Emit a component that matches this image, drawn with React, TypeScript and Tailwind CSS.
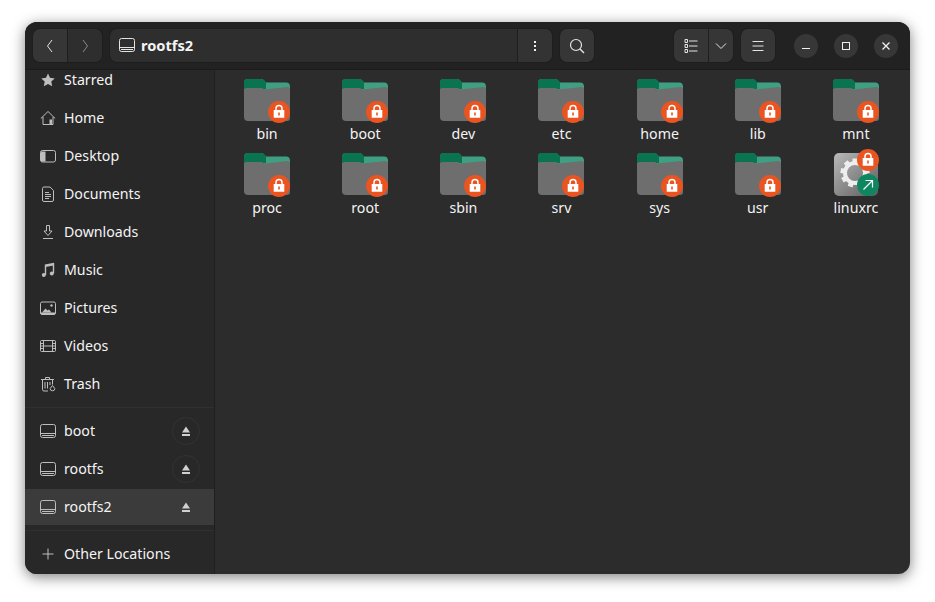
import type { ReactNode } from 'react'

const ICON = '#bebebe'

function Glyph({ children, size = 16 }: { children: ReactNode; size?: number }) {
  return (
    <svg width={size} height={size} viewBox="0 0 16 16" fill="none" stroke={ICON} strokeWidth="1" className="shrink-0">
      {children}
    </svg>
  )
}

function DriveIcon({ color = ICON }: { color?: string }) {
  return (
    <svg width="16" height="16" viewBox="0 0 16 16" fill="none" stroke={color} strokeWidth="1" className="shrink-0">
      <rect x="0.5" y="1.5" width="15" height="13" rx="2" />
      <path d="M0.5 10.5h15M2 12.500h12" />
    </svg>
  )
}

const sidebarIcons: Record<string, ReactNode> = {
  Starred: (
    <Glyph>
      <path d="M8 1.500l2 4.300 4.700.6-3.400 3.200.9 4.700L8 11.900l-4.200 2.400.9-4.700L1.300 6.400 6 5.800z" fill={ICON} stroke="none" />
    </Glyph>
  ),
  Home: (
    <Glyph>
      <path d="M0.800 8.500L8 1.500l7.200 7M3 7v7.500h10V7" />
      <path d="M9.500 9.500h2.500v5H9.500z" fill={ICON} stroke="none" />
    </Glyph>
  ),
  Desktop: (
    <Glyph>
      <rect x="0.5" y="2.500" width="15" height="11.500" rx="2" />
      <path d="M1 3.500h4.500v10H1z" fill={ICON} stroke="none" />
    </Glyph>
  ),
  Documents: (
    <Glyph>
      <path d="M2.500 2.500a1.500 1.500 0 0 1 1.500-1.500h6l3.500 3.500v9.500a1.500 1.500 0 0 1-1.500 1.500H4a1.500 1.500 0 0 1-1.500-1.500z" />
      <path d="M5 6.500h4M5 8.500h6M5 10.500h6M5 12.500h4" />
    </Glyph>
  ),
  Downloads: (
    <Glyph>
      <path d="M6.500 1.500h3v5.500h2.500L8 11.500 4 7h2.500zM3 14.500h10" />
    </Glyph>
  ),
  Music: (
    <Glyph>
      <path d="M5.500 13V3l8-1.500V11" strokeWidth="1.400" />
      <circle cx="3.800" cy="13" r="2" fill={ICON} stroke="none" />
      <circle cx="11.800" cy="11.500" r="2" fill={ICON} stroke="none" />
      <path d="M5.500 3l8-1.500v2l-8 1.500z" fill={ICON} stroke="none" />
    </Glyph>
  ),
  Pictures: (
    <Glyph>
      <rect x="0.5" y="2" width="15" height="12.500" rx="1.500" />
      <path d="M2 12.500l3.500-4 2 2 1.500-1 2.500 3z" fill={ICON} stroke="none" />
      <circle cx="11.500" cy="5.500" r="1.200" fill={ICON} stroke="none" />
      <path d="M1 12.500h14v1.500H1z" fill={ICON} stroke="none" />
    </Glyph>
  ),
  Videos: (
    <Glyph>
      <rect x="0.5" y="2.500" width="15" height="11" rx="1" />
      <path d="M3.500 2.500v11M12.500 2.500v11M0.500 5.500h3M0.500 8h3M0.500 10.500h3M12.500 5.500h3M12.500 8h3M12.500 10.500h3M3.500 8h9" />
    </Glyph>
  ),
  Trash: (
    <Glyph>
      <path d="M1 3.500h13M5.500 3V1.500h4V3M2.500 3.500v10a1.500 1.500 0 0 0 1.500 1.500h4M12.500 3.500v5M5 6v6.500M7.500 6v6.500M10 6v3" />
      <path d="M12.500 9.500l2.300 3a2 2 0 1 1-4.600 0z" />
    </Glyph>
  ),
}

function LockBadge({ cx, cy }: { cx: number; cy: number }) {
  return (
    <g transform={`translate(${cx} ${cy})`}>
      <circle r="11" fill="#e95420" />
      <path d="M-3-2V-3.500a3 3 0 0 1 6 0V-2" fill="none" stroke="#fff" strokeWidth="1.500" />
      <path d="M-5.300-2H5.300V5.700H-5.300z" fill="#fff" />
      <rect x="-.8" y="0.500" width="1.600" height="3" fill="#e95420" />
    </g>
  )
}

function FolderIcon() {
  return (
    <svg width="48" height="48" viewBox="0 0 48 48" className="shrink-0 overflow-visible">
      <path d="M1 5a4 4 0 0 1 4-4h13a4 4 0 0 1 3 1.300L23 4.500h20a4 4 0 0 1 4 4v6H1z" fill="#3f9f82" />
      <path d="M1 5a4 4 0 0 1 4-4h13a4 4 0 0 1 3 1.300L23 4.500v6.500H1z" fill="#0a7350" />
      <path d="M1 12.500a2.500 2.500 0 0 1 2.500-2.500H19l2.500 1.500L44.500 9a2.500 2.500 0 0 1 2.500 2.500V40a3 3 0 0 1-3 3H5a4 4 0 0 1-4-4z" fill="#6e6e6e" />
      <LockBadge cx={36} cy={34} />
    </svg>
  )
}

function ScriptIcon() {
  const teeth = Array.from({ length: 9 }, (_, i) => i * 40)
  return (
    <svg width="48" height="48" viewBox="0 0 48 48" className="shrink-0 overflow-visible">
      <defs>
        <linearGradient id="script" x1="0" y1="0" x2="1" y2="1">
          <stop offset="0" stopColor="#b9b9b9" />
          <stop offset="1" stopColor="#5d5d5d" />
        </linearGradient>
      </defs>
      <rect x="2" y="1" width="44" height="43" rx="5" fill="url(#script)" />
      <g transform="translate(23 21)">
        {teeth.map((a) => (
          <rect key={a} x="-2.500" y="-14.500" width="5" height="5" fill="#eeeeee" transform={`rotate(${a})`} />
        ))}
        <circle r="10" fill="none" stroke="#eeeeee" strokeWidth="4" />
      </g>
      <LockBadge cx={36} cy={8} />
      <g transform="translate(36 33)">
        <circle r="11" fill="#0e8660" />
        <path d="M-4.500 4.500L4.500-4.500M-2.500-4.500H4.500V2.500" fill="none" stroke="#fff" strokeWidth="1.200" />
      </g>
    </svg>
  )
}

function SideRow({ label, icon, selected, eject }: { label: string; icon: ReactNode; selected?: boolean; eject?: boolean }) {
  return (
    <div className={`flex h-9 items-center pl-[15px] pr-[14px] ${selected ? 'bg-[#3b3b3b]' : ''}`}>
      {icon}
      <span className="ml-[8px] flex-1 text-[#f4f4f4]">{label}</span>
      {eject !== undefined && (
        <div className={`flex size-[28px] items-center justify-center rounded-full ${eject ? 'border border-[#333333]' : ''}`}>
          <svg width="12" height="12" viewBox="0 0 12 12" fill="#d0d0d0">
            <path d="M6 1.500L10 7.500H2zM2 9h8v2H2z" />
          </svg>
        </div>
      )}
    </div>
  )
}

function Separator() {
  return <div className="my-[5px] h-px bg-[#303030]" />
}

function ToolGlyph({ children }: { children: ReactNode }) {
  return (
    <svg width="16" height="16" viewBox="0 0 16 16" fill="none" stroke="#e4e4e4" strokeWidth="1">
      {children}
    </svg>
  )
}

function WinButton({ children }: { children: ReactNode }) {
  return <div className="flex size-6 items-center justify-center rounded-full bg-[#373737]">{children}</div>
}

const names = ['bin', 'boot', 'dev', 'etc', 'home', 'lib', 'mnt', 'proc', 'root', 'sbin', 'srv', 'sys', 'usr', 'linuxrc']
const places = ['Starred', 'Home', 'Desktop', 'Documents', 'Downloads', 'Music', 'Pictures', 'Videos', 'Trash']

export default function App() {
  return (
    <div className="h-[602px] w-[935px] overflow-hidden bg-white pl-[25px] pt-[22px] font-['Noto_Sans',sans-serif] text-[14.2px]">
      <div className="flex h-[552px] w-[885px] flex-col overflow-hidden rounded-[12px] bg-[#2c2c2c] shadow-[0_3px_14px_rgba(0,0,0,0.5)]">
        {/* Header */}
        <div className="flex h-[48px] shrink-0 items-center border-b border-[#1b1b1b] bg-[#222222] pl-[8px] pr-[12px]">
          <div className="flex h-[33px] w-[69px] overflow-hidden rounded-[7px] shadow-[0_0_0_1px_#1e1e1e]">
            <div className="flex w-[34px] items-center justify-center bg-[#363636]">
              <ToolGlyph><path d="M10 2L5.500 8l4.500 6" /></ToolGlyph>
            </div>
            <div className="flex flex-1 items-center justify-center border-l border-[#1e1e1e] bg-[#2e2e2e]">
              <ToolGlyph><path d="M6 2l4.500 6L6 14" stroke="#8a8a8a" /></ToolGlyph>
            </div>
          </div>
          <div className="ml-[8px] flex h-[33px] w-[442px] items-center overflow-hidden rounded-[7px] bg-[#2e2e2e] shadow-[0_0_0_1px_#1e1e1e]">
            <div className="flex flex-1 items-center pl-[9px]">
              <DriveIcon color="#e4e4e4" />
              <span className="ml-[6px] text-[14.6px] font-bold text-[#f4f4f4]">rootfs2</span>
            </div>
            <div className="flex h-full w-[35px] items-center justify-center border-l border-[#1e1e1e] bg-[#333333]">
              <svg width="16" height="16" viewBox="0 0 16 16" fill="#f0f0f0">
                <rect x="7" y="3" width="2" height="2" />
                <rect x="7" y="7" width="2" height="2" />
                <rect x="7" y="11" width="2" height="2" />
              </svg>
            </div>
          </div>
          <div className="ml-[8px] flex h-[33px] w-[34px] items-center justify-center rounded-[7px] bg-[#363636] shadow-[0_0_0_1px_#1e1e1e]">
            <ToolGlyph>
              <circle cx="7" cy="7" r="5.500" strokeWidth="1.200" />
              <path d="M11 11l4 4" strokeWidth="1.400" />
            </ToolGlyph>
          </div>
          <div className="ml-[80px] flex h-[33px] w-[59px] overflow-hidden rounded-[7px] bg-[#363636] shadow-[0_0_0_1px_#1e1e1e]">
            <div className="flex w-[34px] items-center justify-center">
              <ToolGlyph>
                <path d="M6 3h8.500M6 8h8.500M6 13h8.500" />
                <path d="M2 1.500h2.500v3H2zM2 6.500h2.500v3H2zM2 11.500h2.500v3H2z" />
              </ToolGlyph>
            </div>
            <div className="flex flex-1 items-center justify-center border-l border-[#1e1e1e]">
              <ToolGlyph><path d="M3 5.500L8 10.500l5-5" /></ToolGlyph>
            </div>
          </div>
          <div className="ml-[8px] flex h-[33px] w-[34px] items-center justify-center rounded-[7px] bg-[#363636] shadow-[0_0_0_1px_#1e1e1e]">
            <ToolGlyph><path d="M2.500 3.500h11M2.500 8h11M2.500 12.500h11" /></ToolGlyph>
          </div>
          <div className="ml-[19px] flex gap-4">
            <WinButton>
              <svg width="12" height="12" viewBox="0 0 12 12" stroke="#f0f0f0"><path d="M2 8.500h8" /></svg>
            </WinButton>
            <WinButton>
              <svg width="12" height="12" viewBox="0 0 12 12" fill="none" stroke="#f0f0f0"><rect x="2.500" y="2.500" width="7" height="7" /></svg>
            </WinButton>
            <WinButton>
              <svg width="12" height="12" viewBox="0 0 12 12" stroke="#f0f0f0" strokeWidth="1.300"><path d="M2.500 2.500l7 7M9.500 2.500l-7 7" /></svg>
            </WinButton>
          </div>
        </div>

        <div className="flex min-h-0 flex-1">
          {/* Sidebar */}
          <div className="w-[190px] shrink-0 overflow-hidden border-r border-[#1f1f1f] bg-[#282828]">
            <div className="-mt-[8px] flex flex-col">
              <div className="flex flex-col gap-[2px]">
                {places.map((p) => (
                  <SideRow key={p} label={p} icon={sidebarIcons[p]} />
                ))}
              </div>
              <Separator />
              <div className="flex flex-col gap-[2px]">
                <SideRow label="boot" icon={<DriveIcon />} eject />
                <SideRow label="rootfs" icon={<DriveIcon />} eject />
                <SideRow label="rootfs2" icon={<DriveIcon />} selected eject={false} />
              </div>
              <Separator />
              <SideRow
                label="Other Locations"
                icon={
                  <Glyph>
                    <path d="M8 2.500v11M2.500 8h11" />
                  </Glyph>
                }
              />
            </div>
          </div>

          {/* Files */}
          <div className="min-w-0 flex-1 pl-[3px] pr-[5px] pt-[8px]">
            <div className="grid grid-cols-7">
              {names.map((n) => (
                <div key={n} className="flex h-[74px] flex-col items-center">
                  {n === 'linuxrc' ? <ScriptIcon /> : <FolderIcon />}
                  <span className="-mt-[3px] text-[#f4f4f4]">{n}</span>
                </div>
              ))}
            </div>
          </div>
        </div>
      </div>
    </div>
  )
}
